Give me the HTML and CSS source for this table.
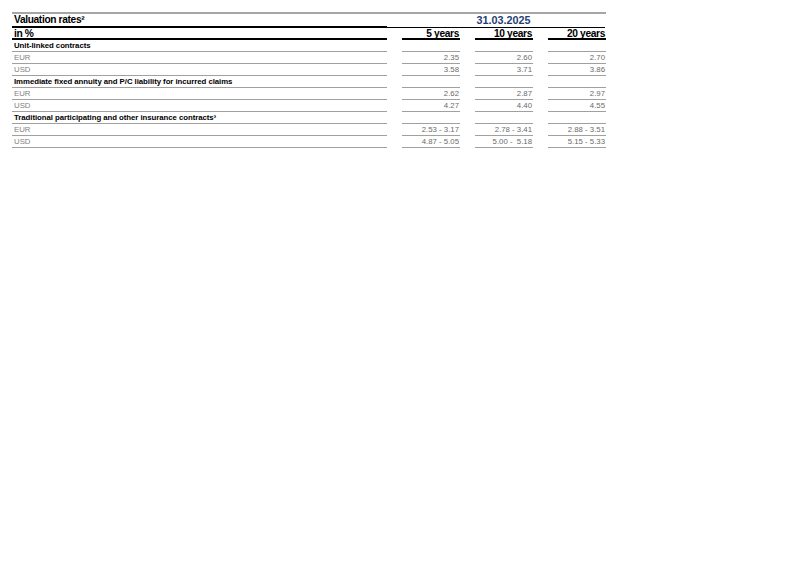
FILE: index.html
```html
<!DOCTYPE html>
<html lang="en">
<head>
<meta charset="utf-8">
<title>Valuation rates</title>
<link rel="stylesheet" href="styles.css">
</head>
<body>
<div class="sheet">
  <div class="row title-row">
    <div class="label title">Valuation rates²</div>
    <div class="date">31.03.2025</div>
  </div>
  <div class="row head-row">
    <div class="label title">in %</div>
    <div class="cell head">5 years</div>
    <div class="cell head">10 years</div>
    <div class="cell head">20 years</div>
  </div>

  <div class="row">
    <div class="label section">Unit-linked contracts</div>
    <div class="cell"></div><div class="cell"></div><div class="cell"></div>
  </div>
  <div class="row">
    <div class="label item">EUR</div>
    <div class="cell num">2.35</div><div class="cell num">2.60</div><div class="cell num">2.70</div>
  </div>
  <div class="row">
    <div class="label item">USD</div>
    <div class="cell num">3.58</div><div class="cell num">3.71</div><div class="cell num">3.86</div>
  </div>

  <div class="row">
    <div class="label section">Immediate fixed annuity and P/C liability for incurred claims</div>
    <div class="cell"></div><div class="cell"></div><div class="cell"></div>
  </div>
  <div class="row">
    <div class="label item">EUR</div>
    <div class="cell num">2.62</div><div class="cell num">2.87</div><div class="cell num">2.97</div>
  </div>
  <div class="row">
    <div class="label item">USD</div>
    <div class="cell num">4.27</div><div class="cell num">4.40</div><div class="cell num">4.55</div>
  </div>

  <div class="row">
    <div class="label section">Traditional participating and other insurance contracts³</div>
    <div class="cell"></div><div class="cell"></div><div class="cell"></div>
  </div>
  <div class="row">
    <div class="label item">EUR</div>
    <div class="cell num">2.53 - 3.17</div><div class="cell num">2.78 - 3.41</div><div class="cell num">2.88 - 3.51</div>
  </div>
  <div class="row">
    <div class="label item">USD</div>
    <div class="cell num">4.87 - 5.05</div><div class="cell num">5.00 -&nbsp; 5.18</div><div class="cell num">5.15 - 5.33</div>
  </div>
</div>
</body>
</html>
```

FILE: styles.css
```css
html, body {
  margin: 0;
  padding: 0;
  background: #ffffff;
}

body {
  font-family: "Liberation Sans", Arial, sans-serif;
  color: #000000;
}

.sheet {
  margin: 12px 0 0 12px;
  width: 594px;
}

.row {
  display: flex;
  height: 12px;
}

.label {
  width: 373px;
  padding-left: 2px;
  border-bottom: 1px solid #a0a0a0;
  white-space: nowrap;
  overflow: hidden;
}

.cell {
  width: 57px;
  padding-right: 1px;
  margin-left: 15px;
  border-bottom: 1px solid #a0a0a0;
  text-align: right;
  white-space: nowrap;
}

.section,
.item,
.num {
  font-size: 7.8px;
  line-height: 12px;
}

.section {
  font-weight: bold;
  letter-spacing: -0.05px;
}

.item {
  color: #7f7f7f;
}

.num {
  color: #6b6b6b;
}

.title {
  font-size: 10.2px;
  font-weight: bold;
  line-height: 12px;
  letter-spacing: -0.35px;
}

.title-row {
  height: 14px;
  border-top: 2px solid #a6a6a6;
}

.title-row .label {
  border-bottom: 2px solid #000000;
  height: 12px;
}

.date {
  width: 203px;
  margin-left: 15px;
  height: 13px;
  border-bottom: 1px solid #000000;
  text-align: center;
  font-size: 10.8px;
  font-weight: bold;
  line-height: 13px;
  color: #1f3f73;
  position: relative;
}

.date::before {
  content: "";
  position: absolute;
  left: -15px;
  width: 15px;
  bottom: -1px;
  border-bottom: 1px solid #000000;
}

.head-row {
  height: 12px;
}

.head-row .label,
.head-row .cell {
  border-bottom: 2px solid #000000;
  height: 10px;
  line-height: 11px;
}

.head {
  font-size: 10.2px;
  font-weight: bold;
  line-height: 11px;
  letter-spacing: -0.35px;
}
```
